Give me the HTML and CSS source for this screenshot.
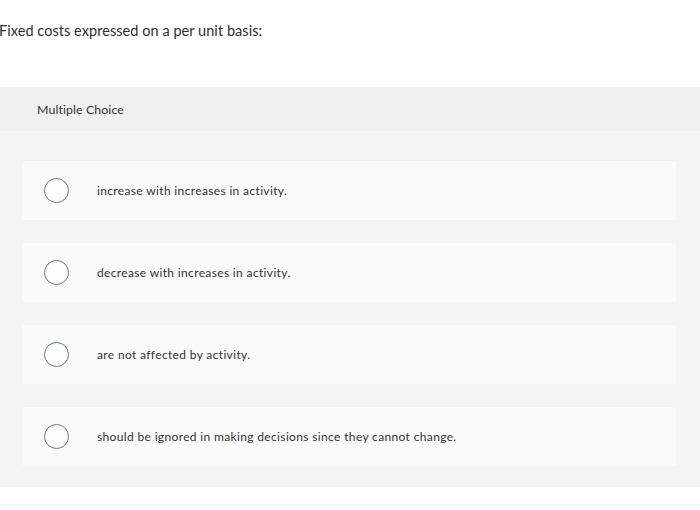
FILE: index.html
```html
<!DOCTYPE html>
<html>
<head>
<meta charset="utf-8">
<link rel="stylesheet" href="styles.css">
</head>
<body>
<div class="question">Fixed costs expressed on a per unit basis:</div>
<div class="mc-header">Multiple Choice</div>
<div class="mc-body">
  <div class="option"><span class="radio"></span><span class="label">increase with increases in activity.</span></div>
  <div class="option"><span class="radio"></span><span class="label">decrease with increases in activity.</span></div>
  <div class="option"><span class="radio"></span><span class="label">are not affected by activity.</span></div>
  <div class="option"><span class="radio"></span><span class="label">should be ignored in making decisions since they cannot change.</span></div>
</div>
<div class="footer-line"></div>
</body>
</html>
```
FILE: styles.css
```css
html, body {
  margin: 0;
  padding: 0;
  background: #ffffff;
}
body {
  width: 700px;
  height: 510px;
  overflow: hidden;
  font-family: Lato, "Liberation Sans", sans-serif;
  color: #333333;
}
.question {
  height: 87px;
  box-sizing: border-box;
  padding-top: 22px;
  margin-left: -1px;
  font-size: 14.5px;
  line-height: 18px;
  letter-spacing: 0.05px;
  color: #2e2e2e;
}
.mc-header {
  height: 44px;
  box-sizing: border-box;
  background: #f0f0f0;
  padding-left: 37px;
  display: flex;
  align-items: center;
  font-size: 12.3px;
  letter-spacing: 0.12px;
  color: #333;
}
.mc-body {
  background: #f4f4f4;
  padding: 30px 24px 21px 22px;
  display: flex;
  flex-direction: column;
  gap: 23px;
}
.option {
  height: 59px;
  background: #fafafa;
  border-radius: 2px;
  display: flex;
  align-items: center;
  padding-left: 22px;
  box-shadow: 0 0 1px rgba(0,0,0,0.04);
}
.radio {
  width: 23px;
  height: 23px;
  border: 1.5px solid #5f7b96;
  border-radius: 50%;
  background: #fdfdfd;
  flex: none;
}
.label {
  margin-left: 28px;
  font-size: 12px;
  letter-spacing: 0.35px;
  color: #333;
}
.footer-line {
  margin-top: 17px;
  height: 1px;
  background: #f3f3f3;
}
```
